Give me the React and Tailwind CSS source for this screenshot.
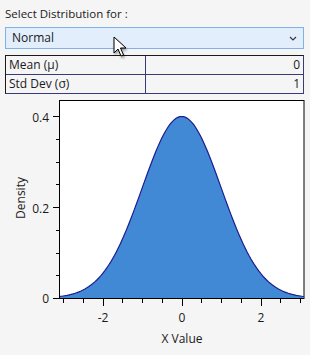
import React from "react"

const X0 = 181.7
const XS = 39.5
const YB = 204
const YS = 455

function pdf(x) {
  return Math.exp(-x * x / 2) / Math.sqrt(2 * Math.PI)
}

function curvePoints() {
  const pts = []
  for (let x = -3.1; x <= 3.101; x += 0.05) {
    pts.push([X0 + XS * x, YB - YS * pdf(x)])
  }
  return pts
}

function Chart() {
  const pts = curvePoints()
  const line = pts.map((p, i) => `${i ? "L" : "M"}${p[0].toFixed(2)},${p[1].toFixed(2)}`).join(" ")
  const area = `${line} L304,${YB} L59,${YB} Z`
  const xTicks = []
  for (let v = -3; v <= 3; v += 0.5) xTicks.push(v)
  const yTicks = []
  for (let v = 0; v <= 0.451; v += 0.05) yTicks.push(v)
  return (
    <svg width="310" height="262" className="block -mx-[5px]" style={{ fontFamily: "'Open Sans', 'Noto Sans', sans-serif" }}>
      <rect x="59.5" y="6.5" width="244.5" height="198" fill="#ffffff" stroke="#000000" strokeWidth="1" />
      <clipPath id="plot">
        <rect x="60" y="7" width="244" height="197" />
      </clipPath>
      <g clipPath="url(#plot)">
        <path d={area} fill="#4189d5" />
        <path d={line} fill="none" stroke="#1c1c8f" strokeWidth="1.2" />
      </g>
      <line x1="59.5" y1="6" x2="59.5" y2="205" stroke="#000" />
      <line x1="59" y1="204.5" x2="304" y2="204.5" stroke="#000" />
      {yTicks.map((v, i) => {
        const y = Math.round(YB - YS * v) + 0.5
        const major = i % 4 === 0
        if (y < 6) return null
        return <line key={i} x1={major ? 53 : 56} y1={y} x2="59" y2={y} stroke="#000" />
      })}
      {xTicks.map((v, i) => {
        const x = Math.round(X0 + XS * v) + 0.5
        const major = i % 2 === 0 && Math.abs(v) % 2 === 0
        return <line key={i} x1={x} y1="205" x2={x} y2={major ? 212 : 209} stroke="#000" />
      })}
      <text x="49" y="27.5" textAnchor="end" fontSize="12" fill="#1a1a1a">0.4</text>
      <text x="49" y="118.5" textAnchor="end" fontSize="12" fill="#1a1a1a">0.2</text>
      <text x="49" y="208.5" textAnchor="end" fontSize="12" fill="#1a1a1a">0</text>
      <text x="103" y="228" textAnchor="middle" fontSize="12" fill="#1a1a1a">-2</text>
      <text x="182" y="228" textAnchor="middle" fontSize="12" fill="#1a1a1a">0</text>
      <text x="261" y="228" textAnchor="middle" fontSize="12" fill="#1a1a1a">2</text>
      <text x="182" y="249" textAnchor="middle" fontSize="12" fill="#1a1a1a">X Value</text>
      <text x="0" y="0" transform="translate(25,104) rotate(-90)" textAnchor="middle" fontSize="12" fill="#1a1a1a">Density</text>
    </svg>
  )
}

export default function App() {
  return (
    <div className="relative w-[310px] h-[355px] bg-[#f5f5f5] px-[5px] pt-[6px] overflow-hidden text-[12px] text-[#1a1a1a]" style={{ fontFamily: "'Open Sans', 'Noto Sans', sans-serif" }}>
      <div className="leading-[16px] h-[16px] text-[11.5px]">Select Distribution for :</div>
      <div className="mt-[5px] h-[22px] w-[299px] flex items-center justify-between border border-[#7fb2e6] bg-[#e2eefb] pl-[6px] pr-[6px] text-[12px]">
        <span>Normal</span>
        <svg width="8" height="5" viewBox="0 0 8 5"><path d="M1 1 L4 4 L7 1" fill="none" stroke="#333" strokeWidth="1.1" /></svg>
      </div>
      <div className="mt-[6px] w-[299px] border border-[#1a1a1a] border-b-[#3a3a7a] border-r-[#3a3a7a]">
        <div className="flex h-[19px] border-b border-[#3a3a7a]">
          <div className="w-[140px] pl-[3px] flex items-center border-r border-[#3a3a7a]">Mean (μ)</div>
          <div className="flex-1 flex items-center justify-end pr-[3px]">0</div>
        </div>
        <div className="flex h-[18px]">
          <div className="w-[140px] pl-[3px] flex items-center border-r border-[#3a3a7a]">Std Dev (σ)</div>
          <div className="flex-1 flex items-center justify-end pr-[3px]">1</div>
        </div>
      </div>
      <Chart />
      <svg className="absolute left-[113px] top-[36px] drop-shadow-[1px_2px_1px_rgba(0,0,0,0.35)]" width="14" height="22" viewBox="0 0 14 22">
        <path d="M1 1 L1 17 L5 13 L8 20 L10.5 19 L7.5 12 L13 12 Z" fill="#ffffff" stroke="#000" strokeWidth="1" strokeLinejoin="round" />
      </svg>
    </div>
  )
}
